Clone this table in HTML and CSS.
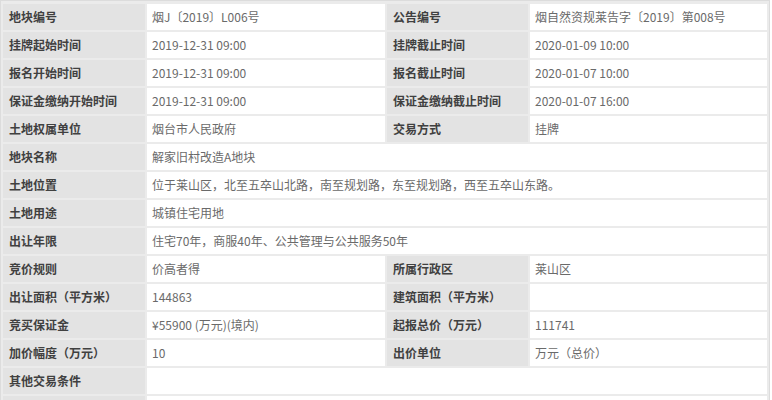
FILE: index.html
```html
<!DOCTYPE html>
<html lang="zh-CN">
<head>
<meta charset="utf-8">
<title>地块信息</title>
<link rel="stylesheet" href="styles.css">
</head>
<body>
<div class="info-grid">
  <div class="label">地块编号</div><div class="value">烟J〔2019〕L006号</div>
  <div class="label">公告编号</div><div class="value">烟自然资规莱告字〔2019〕第008号</div>

  <div class="label">挂牌起始时间</div><div class="value">2019-12-31 09:00</div>
  <div class="label">挂牌截止时间</div><div class="value">2020-01-09 10:00</div>

  <div class="label">报名开始时间</div><div class="value">2019-12-31 09:00</div>
  <div class="label">报名截止时间</div><div class="value">2020-01-07 10:00</div>

  <div class="label">保证金缴纳开始时间</div><div class="value">2019-12-31 09:00</div>
  <div class="label">保证金缴纳截止时间</div><div class="value">2020-01-07 16:00</div>

  <div class="label">土地权属单位</div><div class="value">烟台市人民政府</div>
  <div class="label">交易方式</div><div class="value">挂牌</div>

  <div class="label">地块名称</div><div class="value wide">解家旧村改造A地块</div>

  <div class="label">土地位置</div><div class="value wide">位于莱山区，北至五卒山北路，南至规划路，东至规划路，西至五卒山东路。</div>

  <div class="label">土地用途</div><div class="value wide">城镇住宅用地</div>

  <div class="label">出让年限</div><div class="value wide">住宅70年，商服40年、公共管理与公共服务50年</div>

  <div class="label">竞价规则</div><div class="value">价高者得</div>
  <div class="label">所属行政区</div><div class="value">莱山区</div>

  <div class="label">出让面积（平方米）</div><div class="value">144863</div>
  <div class="label">建筑面积（平方米）</div><div class="value"></div>

  <div class="label">竞买保证金</div><div class="value">¥55900 (万元)(境内)</div>
  <div class="label">起报总价（万元）</div><div class="value">111741</div>

  <div class="label">加价幅度（万元）</div><div class="value">10</div>
  <div class="label">出价单位</div><div class="value">万元（总价）</div>

  <div class="label">其他交易条件</div><div class="value wide"></div>

  <div class="label"></div><div class="value wide"></div>
</div>
</body>
</html>
```

FILE: styles.css
```css
html, body {
  margin: 0;
  padding: 0;
  background: #ffffff;
}

body {
  font-family: "Noto Sans CJK SC", "Noto Sans", sans-serif;
  font-size: 12px;
}

.info-grid {
  display: grid;
  grid-template-columns: 142px 238px 141px 237px;
  grid-auto-rows: 26px;
  gap: 2px;
  padding: 2px;
  padding-top: 3px;
  width: 764px;
  border: 1px solid #dcdcdc;
  background: #ebebeb;
}

.label,
.value {
  display: flex;
  align-items: center;
  white-space: nowrap;
  overflow: hidden;
  line-height: 16px;
}

.label {
  background: #e3e3e3;
  color: #404040;
  font-weight: bold;
  padding-left: 6px;
}

.value {
  background: #ffffff;
  color: #6a6a6a;
  padding-left: 5px;
}

.wide {
  grid-column: span 3;
}
```
